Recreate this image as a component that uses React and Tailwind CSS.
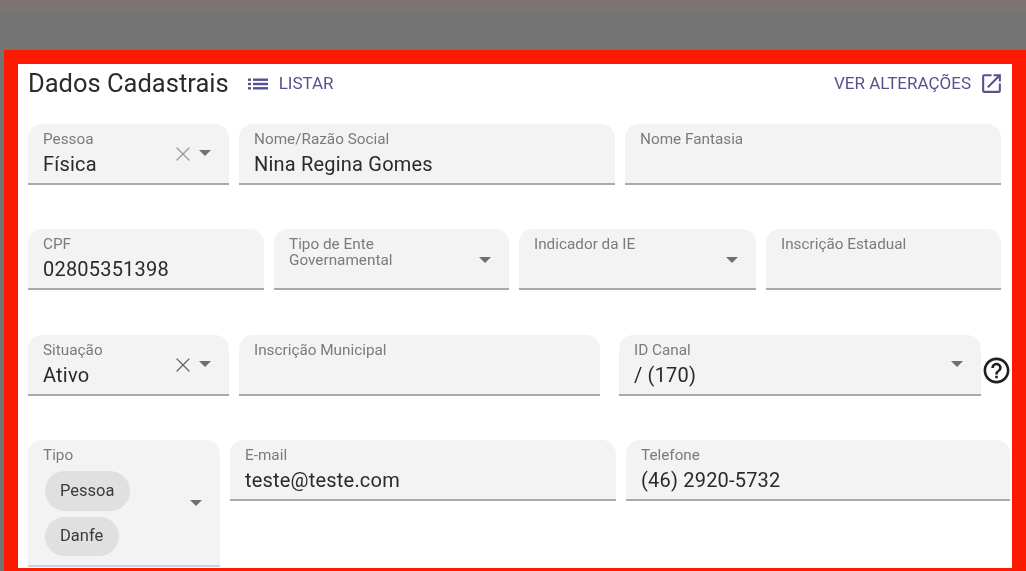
import { X } from "lucide-react";

function ListIcon() {
  return (
    <svg width="20" height="12" viewBox="0 0 20 12" fill="#54528f" className="shrink-0">
      <rect x="0" y="0.500" width="3" height="2.400" />
      <rect x="0" y="4.800" width="3" height="2.400" />
      <rect x="0" y="9.100" width="3" height="2.400" />
      <rect x="5" y="0.500" width="15" height="2.400" />
      <rect x="5" y="4.800" width="15" height="2.400" />
      <rect x="5" y="9.100" width="15" height="2.400" />
    </svg>
  );
}

function OpenInNewIcon() {
  return (
    <svg width="25" height="25" viewBox="0 0 24 24" fill="#54528f" className="shrink-0">
      <path d="M19 19H5V5h7V3H5c-1.110 0-2 .9-2 2v14c0 1.100.89 2 2 2h14c1.100 0 2-.9 2-2v-7h-2v7zM14 3v2h3.590l-9.830 9.830 1.410 1.410L19 6.410V10h2V3h-7z" />
    </svg>
  );
}

function HelpIcon() {
  return (
    <svg width="31" height="31" viewBox="0 0 24 24" fill="#1f1f1f" className="shrink-0 mt-[9px]">
      <path d="M11 18h2v-2h-2v2zm1-16C6.480 2 2 6.480 2 12s4.480 10 10 10 10-4.480 10-10S17.520 2 12 2zm0 18c-4.410 0-8-3.590-8-8s3.590-8 8-8 8 3.590 8 8-3.590 8-8 8zm0-14c-2.210 0-4 1.790-4 4h2c0-1.100.9-2 2-2s2 .9 2 2c0 2-3 1.750-3 5h2c0-2.250 3-2.500 3-5 0-2.210-1.790-4-4-4z" />
    </svg>
  );
}

function Caret({ className = "" }) {
  return <div className={`w-0 h-0 border-l-[6.500px] border-r-[6.500px] border-t-[6.500px] border-l-transparent border-r-transparent border-t-[#6f6f6f] ${className}`} />;
}

function Field({ label, value, width, select, clear, clearColor = "#9a9a9a", twoLine }) {
  return (
    <div className={`relative h-[61px] shrink-0 rounded-t-[14px] bg-[#f3f3f3] border-b-2 border-[#a9a9a9] pl-[15px] pt-[7px] ${width}`}>
      <div className={`text-[15.300px] text-[#7b7b7b] ${twoLine ? "leading-[16px]" : "leading-[17px]"}`}>{label}</div>
      {value && <div className="mt-[3px] text-[20px] leading-[27px] text-[#2a2a2a] tracking-[0.2px]">{value}</div>}
      {clear && <X size={24} strokeWidth={1.2} color={clearColor} className="absolute right-[34px] top-[18px]" />}
      {select && <Caret className={`absolute right-[18px] ${value ? "top-[26px]" : "top-[28px]"}`} />}
    </div>
  );
}

export default function App() {
  return (
    <div className="w-[1026px] h-[571px] overflow-hidden bg-[#747474] font-['Roboto',sans-serif] blur-[0.3px]">
      <div className="h-3 bg-[#7d7472]" />
      <div className="h-[38px]" />
      <div className="ml-1 h-[521px] border-t-[14px] border-l-[14px] border-r-[14px] border-b-[3px] border-[#fc1a00] bg-white pl-[10px] pr-[11px]">
        <div className="h-[60px] flex items-center justify-between pb-[21px]">
          <div className="flex items-center">
            <span className="text-[25.500px] text-[#2b2b2b]">Dados Cadastrais</span>
            <span className="ml-[19px] flex items-center gap-[11px] text-[17px] text-[#54528f]">
              <ListIcon />
              LISTAR
            </span>
          </div>
          <div className="flex items-center gap-[8px] mr-[-3px] text-[17px] text-[#54528f]">
            VER ALTERAÇÕES
            <OpenInNewIcon />
          </div>
        </div>

        <div className="flex gap-[10px]">
          <Field label="Pessoa" value="Física" width="w-[201px]" select clear />
          <Field label="Nome/Razão Social" value="Nina Regina Gomes" width="w-[376px]" />
          <Field label="Nome Fantasia" width="w-[376px]" />
        </div>

        <div className="flex gap-[10px] mt-[44px]">
          <Field label="CPF" value="02805351398" width="w-[236px]" />
          <Field label={<>Tipo de Ente<br />Governamental</>} width="w-[235px]" select twoLine />
          <Field label="Indicador da IE" width="w-[237px]" select />
          <Field label="Inscrição Estadual" width="w-[235px]" />
        </div>

        <div className="flex items-center mt-[45px] mr-[-11px]">
          <Field label="Situação" value="Ativo" width="w-[201px]" select clear clearColor="#666666" />
          <div className="w-[10px] shrink-0" />
          <Field label="Inscrição Municipal" width="w-[361px]" />
          <div className="w-[19px] shrink-0" />
          <Field label="ID Canal" value="/ (170)" width="w-[362px]" select />
          <HelpIcon />
        </div>

        <div className="flex gap-[10px] mt-[44px] items-start mr-[-9px]">
          <div className="relative h-[127px] w-[192px] shrink-0 rounded-t-[14px] bg-[#f3f3f3] border-b-2 border-[#c9d3dc] pl-[15px] pt-[7px]">
            <div className="text-[15.300px] leading-[17px] text-[#7b7b7b]">Tipo</div>
            <div className="mt-[7px] flex flex-col items-start gap-[6px]">
              <span className="h-[40px] rounded-full bg-[#e0e0e0] pl-[15px] pr-[16px] ml-[2px] flex items-center text-[16.500px] text-[#3a3a3a]">Pessoa</span>
              <span className="h-[39px] rounded-full bg-[#e0e0e0] pl-[15px] pr-[16px] ml-[2px] flex items-center text-[16.500px] text-[#3a3a3a]">Danfe</span>
            </div>
            <Caret className="absolute right-[18px] top-[60px]" />
          </div>
          <Field label="E-mail" value="teste@teste.com" width="w-[386px]" />
          <Field label="Telefone" value="(46) 2920-5732" width="w-[384px]" />
        </div>
      </div>
    </div>
  );
}
